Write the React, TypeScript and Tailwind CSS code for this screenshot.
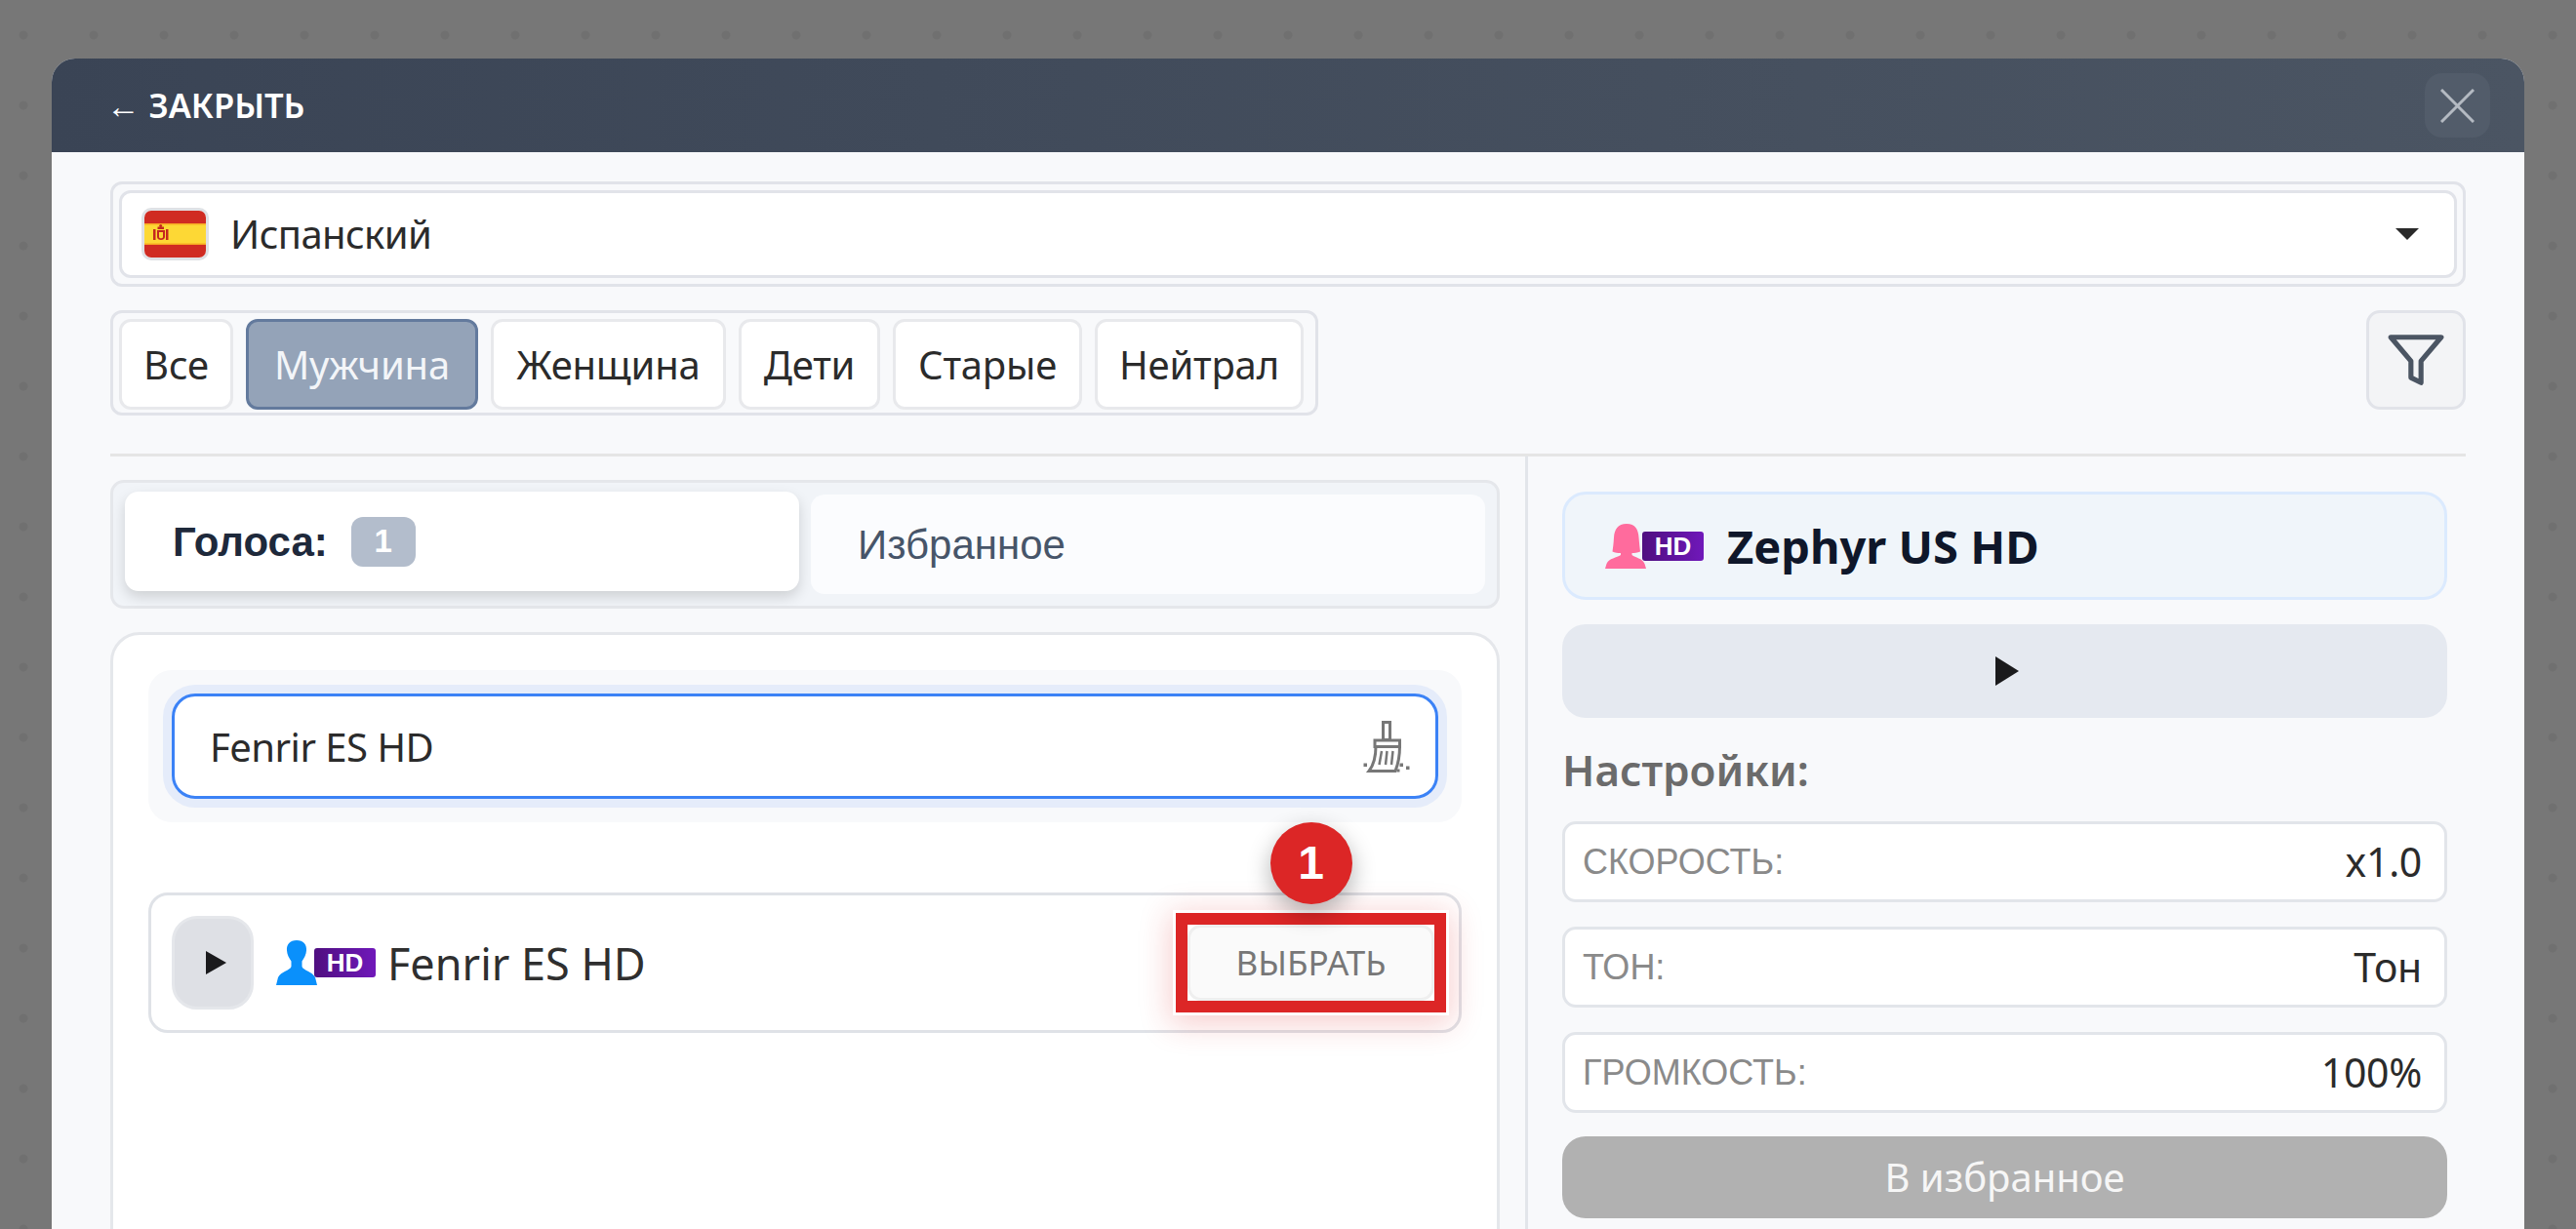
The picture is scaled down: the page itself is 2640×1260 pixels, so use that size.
import React from "react";

const NOTO = "font-['Noto_Sans',sans-serif]";
const ARIAL = "font-['Liberation_Sans',Arial,sans-serif]";

function HdBadge() {
  return (
    <span
      className={`flex h-[30px] w-[63px] shrink-0 items-center justify-center rounded-[3px] bg-gradient-to-r from-[#4f0f80] to-[#7018ba] text-[26px] font-bold leading-none text-white ${ARIAL}`}
    >
      HD
    </span>
  );
}

function Male() {
  return (
    <svg viewBox="0 0 42 46" className="h-[46px] w-[42px] shrink-0 fill-[#0a90fb]">
      <path d="M21 0C14 0 10.500 4.500 11 10.500C11.300 14.500 13 18 15.500 21.500L15.500 27C14 31 5 32 2 38L0 46H42L40 38C37 32 28 31 26.500 27L26.500 21.500C29 18 30.700 14.500 31 10.500C31.500 4.500 28 0 21 0Z" />
    </svg>
  );
}

function Female() {
  return (
    <svg viewBox="0 0 42 46" className="h-[46px] w-[42px] shrink-0 fill-[#ff6b9d]">
      <path d="M22 0C13 0 9.500 6 9 14C8.700 20 8 25 7.500 28.500C10 29.500 13 30 16 30L16 32C12 35 4 35 1.500 41L0 46H42L40.500 41C38 35 31 35 27.500 32L27.500 30C30 30 33 29.500 36 28.500C35.500 25 35 20 34.500 14C34 6 31 0 22 0Z" />
    </svg>
  );
}

function Flag() {
  return (
    <span className="h-[54px] w-[69px] shrink-0 overflow-hidden rounded-[10px] border-[3px] border-[#dfe1e5]">
      <svg viewBox="0 0 63 48" className="block h-full w-full">
        <rect width="63" height="48" fill="#d02b22" />
        <rect y="13" width="63" height="22" fill="#f7a923" />
        <rect y="14.500" width="63" height="19" fill="#fdd835" />
        <g fill="#c5281f">
          <rect x="9" y="19" width="2.500" height="11" />
          <rect x="22" y="19" width="2.500" height="11" />
          <rect x="13.500" y="16.500" width="6.500" height="2.500" />
          <circle cx="16.700" cy="15.500" r="1.500" />
          <path d="M13 20h8v7c0 2-2 3-4 3s-4-1-4-3zm2 2v5c0 .8 1 1.300 2 1.300s2-.5 2-1.300v-5z" />
        </g>
      </svg>
    </span>
  );
}

function Broom() {
  return (
    <svg viewBox="0 0 48 53" className="h-[53px] w-[48px] fill-none stroke-[#777777] stroke-[3]">
      <rect x="20.500" y="1.500" width="7" height="18" />
      <path d="M12 20H37.500V26.500H12Z" />
      <path d="M13 26C13 36 11 45 6 51.500H33C36 44 37.500 34 37.500 26" />
      <path d="M19 31L16.500 45M24.500 31L23 45M30.500 31L29 45" strokeWidth="2.500" />
      <g fill="#777777" stroke="none">
        <rect x="0.500" y="43.500" width="3.500" height="3.500" />
        <rect x="37.500" y="43.500" width="3.500" height="3.500" />
        <rect x="44" y="46.500" width="3.500" height="3.500" />
        <rect x="34.500" y="49.500" width="3" height="3" />
      </g>
    </svg>
  );
}

function Play({ w, h }: { w: number; h: number }) {
  return (
    <svg viewBox="0 0 10 10" preserveAspectRatio="none" width={w} height={h} className="block fill-[#1a1a1c]">
      <path d="M0 0L10 5L0 10Z" />
    </svg>
  );
}

function Setting({ label, value }: { label: string; value: string }) {
  return (
    <div className="flex h-[83px] items-center justify-between rounded-[14px] border-[3px] border-[#e2e5ea] bg-white pl-[18px] pr-[23px]">
      <span className={`${ARIAL} text-[36px] text-[#8a8a8a]`}>{label}</span>
      <span className={`${NOTO} text-[41px] tracking-[-0.3px] text-[#2b2b2b]`}>{value}</span>
    </div>
  );
}

const tabs = [
  { label: "Все", width: "w-[117px]" },
  { label: "Мужчина", width: "w-[238px]" },
  { label: "Женщина", width: "w-[241px]" },
  { label: "Дети", width: "w-[145px]" },
  { label: "Старые", width: "w-[194px]" },
  { label: "Нейтрал", width: "w-[214px]" },
];

export default function App() {
  return (
    <div className="h-[1260px] w-[2640px] overflow-hidden bg-[#777777] bg-[radial-gradient(circle,#707070_4px,transparent_5px)] bg-size-[72px_72px] bg-position-[-12px_0px] px-[53px] pt-[60px]">
      <div className="h-[1300px] overflow-hidden rounded-t-[24px] bg-[#f8f9fb]">
        <header className="flex h-[96px] items-center justify-between bg-gradient-to-r from-[#3a4455] to-[#4b5563] pl-[56px] pr-[35px]">
          <span className={`${NOTO} pt-[2px] text-[34.500px] font-semibold text-white`}>
            <span className={`${ARIAL} font-normal`}>←</span> ЗАКРЫТЬ
          </span>
          <button className="flex h-[66px] w-[67px] items-center justify-center rounded-[18px] bg-[#525c6a]">
            <svg viewBox="0 0 35 35" className="h-[35px] w-[35px] stroke-[#b4bac2] stroke-[3]">
              <path d="M1 1L34 34M34 1L1 34" />
            </svg>
          </button>
        </header>

        <div className="px-[60px] pt-[30px]">
          <div className="h-[108px] rounded-[12px] border-[3px] border-[#e1e3e9] p-[6px]">
            <div className="flex h-[90px] items-center justify-between rounded-[12px] border-[3px] border-[#e1e3e9] bg-white pl-[20px] pr-[36px]">
              <div className="flex items-center gap-[22px]">
                <Flag />
                <span className={`${NOTO} text-[40px] tracking-[-0.6px] text-[#2b2b2b]`}>Испанский</span>
              </div>
              <span className="h-0 w-0 border-x-[12.500px] border-t-[12px] border-x-transparent border-t-[#2a2a2a]" />
            </div>
          </div>

          <div className="mt-[24px] flex items-start justify-between">
            <div className="flex h-[108px] gap-[13px] rounded-[12px] border-[3px] border-[#e1e3e9] py-[6px] pl-[6px] pr-[12px]">
              {tabs.map((t) => (
                <button
                  key={t.label}
                  className={`h-[93px] ${t.width} rounded-[12px] border-[3px] ${NOTO} text-[40px] tracking-[-0.2px] ${
                    t.label === "Мужчина"
                      ? "border-[#637a9d] bg-[#94a3b8] text-[#f3f5f8]"
                      : "border-[#e8e9ec] bg-white text-[#2b2b2b]"
                  }`}
                >
                  {t.label}
                </button>
              ))}
            </div>
            <button className="flex h-[102px] w-[102px] items-center justify-center rounded-[14px] border-[3px] border-[#e1e3e9] bg-[#f3f4f6]">
              <svg viewBox="0 0 24 24" className="h-[62px] w-[62px] fill-none stroke-[#4b5563] stroke-2" strokeLinejoin="round" strokeLinecap="round">
                <polygon points="22 3 2 3 10 12.460 10 19 14 21 14 12.460 22 3" />
              </svg>
            </button>
          </div>

          <div className="mt-[39px] flex border-t-[3px] border-[#e5e5e5]">
            <div className="w-[1424px] shrink-0 pt-[24px]">
              <div className="grid grid-cols-2 gap-[12px] rounded-[14px] border-[3px] border-[#e5e7eb] bg-[#f1f4f8] p-[12px]">
                <div className="flex h-[102px] -translate-y-[3px] items-center gap-[24px] rounded-[14px] bg-white pl-[49px] shadow-[0_6px_14px_rgba(0,0,0,0.15)]">
                  <span className={`${ARIAL} text-[42px] font-bold text-[#1e293b]`}>Голоса:</span>
                  <span className={`${ARIAL} flex h-[51px] w-[66px] items-center justify-center rounded-[12px] bg-[#b3bdcc] text-[33px] font-bold text-white`}>1</span>
                </div>
                <div className={`${ARIAL} flex h-[102px] items-center rounded-[14px] bg-[#fbfcfe] pl-[48px] text-[42px] text-[#475569]`}>
                  Избранное
                </div>
              </div>

              <div className="mt-[24px] h-[700px] rounded-[30px] border-[3px] border-[#e5e7eb] bg-white p-[36px]">
                <div className="rounded-[24px] bg-[#f8f9fb] p-[24px]">
                  <div className="flex h-[108px] items-center justify-between rounded-[24px] border-[3px] border-[#3b82f6] bg-white pl-[36px] pr-[26px] shadow-[0_0_0_9px_#e5ecfa]">
                    <span className={`${NOTO} pt-[2px] text-[40px] tracking-[-0.5px] text-[#2b2b2b]`}>Fenrir ES HD</span>
                    <Broom />
                  </div>
                </div>

                <div className="mt-[72px] flex h-[144px] items-center rounded-[20px] border-[3px] border-[#dfe2e7] pl-[21px] pr-[25px]">
                  <button className="flex h-[96px] w-[84px] shrink-0 items-center justify-center rounded-[26px] border-[3px] border-[#e5e7eb] bg-[#dee0e5] pl-[6px]">
                    <Play w={21} h={24} />
                  </button>
                  <div className="ml-[23px] flex items-center">
                    <Male />
                    <span className="-ml-[3px]"><HdBadge /></span>
                  </div>
                  <span className={`${NOTO} ml-[12px] pt-[2px] text-[45px] text-[#2f2f2f]`}>Fenrir ES HD</span>
                  <div className="relative ml-auto">
                    <button className={`${NOTO} flex h-[78px] w-[253px] items-center justify-center rounded-[14px] border-[3px] border-[#efefef] bg-[#fafafa] text-[35px] text-[#777777]`}>
                      ВЫБРАТЬ
                    </button>
                    <div className="pointer-events-none absolute -inset-[12px] border-[12px] border-[#dc2626] shadow-[0_0_0_3px_#ffffff,0_6px_30px_6px_rgba(220,38,38,0.22)]" />
                    <div className={`${ARIAL} absolute -top-[105px] left-1/2 flex h-[84px] w-[84px] -translate-x-1/2 items-center justify-center rounded-full bg-[#dc2626] text-[48px] font-bold text-white shadow-[0_9px_24px_rgba(0,0,0,0.3)]`}>
                      1
                    </div>
                  </div>
                </div>
              </div>
            </div>

            <div className="ml-[26px] flex-1 border-l-[3px] border-[#e2e5ea] pl-[35px] pr-[19px] pt-[36px]">
              <div className="flex h-[111px] items-center rounded-[24px] border-[3px] border-[#dbeafe] bg-[#f0f5fa] pl-[41px]">
                <Female />
                <span className="-ml-[4px]"><HdBadge /></span>
                <span className={`${NOTO} ml-[24px] pt-[2px] text-[47px] font-bold text-[#0f172a]`}>Zephyr US HD</span>
              </div>
              <button className="mt-[25px] flex h-[96px] w-full items-center justify-center rounded-[24px] bg-[#e5e9f0] pl-[5px]">
                <Play w={24} h={30} />
              </button>
              <h3 className={`${NOTO} flex h-[106px] items-center text-[44px] font-semibold text-[#6b6b6b]`}>Настройки:</h3>
              <div className="flex flex-col gap-[25px]">
                <Setting label="СКОРОСТЬ:" value="x1.0" />
                <Setting label="ТОН:" value="Тон" />
                <Setting label="ГРОМКОСТЬ:" value="100%" />
              </div>
              <button className={`${NOTO} mt-[24px] flex h-[84px] w-full items-center justify-center rounded-[24px] bg-[#b1b1b1] text-[40px] text-[#f6f6f6]`}>
                В избранное
              </button>
            </div>
          </div>
        </div>
      </div>
    </div>
  );
}
